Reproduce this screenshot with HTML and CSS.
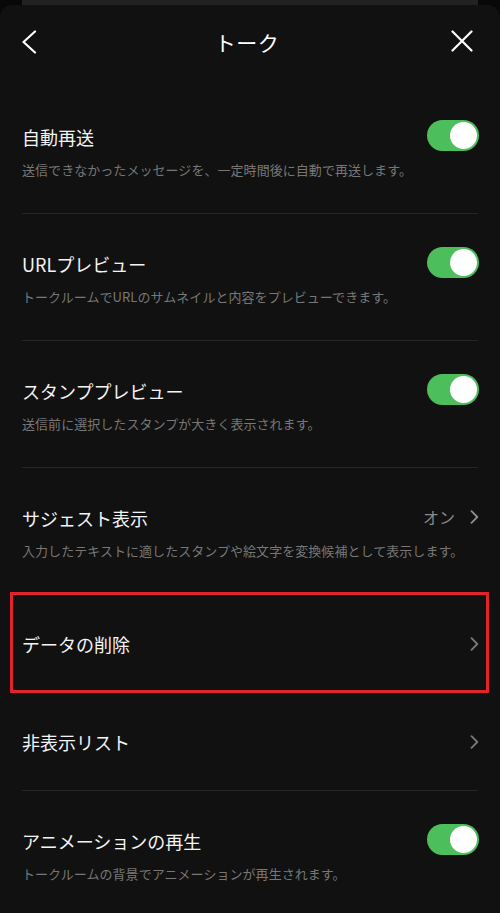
FILE: index.html
```html
<!DOCTYPE html>
<html lang="ja">
<head>
<meta charset="utf-8">
<title>トーク</title>
<link rel="stylesheet" href="styles.css">
</head>
<body>
<div class="screen">
  <div class="backdrop-strip"></div>
  <div class="sheet">
    <header class="header">
      <button class="icon-btn back" aria-label="戻る">
        <svg width="16" height="24" viewBox="0 0 16 24"><path d="M14 1.5 L2.5 12 L14 22.5" fill="none" stroke="#fff" stroke-width="2.2" stroke-linecap="round" stroke-linejoin="round"/></svg>
      </button>
      <h1 class="header-title">トーク</h1>
      <button class="icon-btn close" aria-label="閉じる">
        <svg width="22" height="22" viewBox="0 0 22 22"><path d="M1.5 1.5 L20.5 20.5 M20.5 1.5 L1.5 20.5" fill="none" stroke="#fff" stroke-width="2.2" stroke-linecap="round"/></svg>
      </button>
    </header>
    <ul class="list">
      <li class="row has-desc">
        <div class="row-head"><span class="title">自動再送</span><span class="toggle"><span class="knob"></span></span></div>
        <p class="desc">送信できなかったメッセージを、一定時間後に自動で再送します。</p>
      </li>
      <li class="row has-desc">
        <div class="row-head"><span class="title">URLプレビュー</span><span class="toggle"><span class="knob"></span></span></div>
        <p class="desc">トークルームでURLのサムネイルと内容をプレビューできます。</p>
      </li>
      <li class="row has-desc">
        <div class="row-head"><span class="title">スタンププレビュー</span><span class="toggle"><span class="knob"></span></span></div>
        <p class="desc">送信前に選択したスタンプが大きく表示されます。</p>
      </li>
      <li class="row has-desc">
        <div class="row-head"><span class="title">サジェスト表示</span>
          <span class="value">オン<svg class="chev" width="9" height="14" viewBox="0 0 9 14"><path d="M1.5 1.2 L7.3 7 L1.5 12.8" fill="none" stroke="#8f8f8f" stroke-width="1.8" stroke-linecap="round" stroke-linejoin="round"/></svg></span>
        </div>
        <p class="desc">入力したテキストに適したスタンプや絵文字を変換候補として表示します。</p>
      </li>
      <li class="row">
        <div class="row-head"><span class="title">データの削除</span>
          <svg class="chev" width="9" height="14" viewBox="0 0 9 14"><path d="M1.5 1.2 L7.3 7 L1.5 12.8" fill="none" stroke="#7a7a7a" stroke-width="1.8" stroke-linecap="round" stroke-linejoin="round"/></svg>
        </div>
      </li>
      <li class="row">
        <div class="row-head"><span class="title">非表示リスト</span>
          <svg class="chev" width="9" height="14" viewBox="0 0 9 14"><path d="M1.5 1.2 L7.3 7 L1.5 12.8" fill="none" stroke="#7a7a7a" stroke-width="1.8" stroke-linecap="round" stroke-linejoin="round"/></svg>
        </div>
      </li>
      <li class="row has-desc">
        <div class="row-head"><span class="title">アニメーションの再生</span><span class="toggle"><span class="knob"></span></span></div>
        <p class="desc">トークルームの背景でアニメーションが再生されます。</p>
      </li>
    </ul>
  </div>
  <div class="highlight"></div>
</div>
</body>
</html>
```
FILE: styles.css
```css
* { box-sizing: border-box; }
html, body {
  margin: 0;
  padding: 0;
  background: #080808;
}
body {
  font-family: "Noto Sans CJK JP", "Noto Sans", sans-serif;
  color: #fff;
}
.screen {
  position: relative;
  width: 500px;
  height: 913px;
  overflow: hidden;
}
.backdrop-strip {
  height: 5px;
  margin: 0 22px;
  background: #222224;
}
.sheet {
  background: #111111;
  border-radius: 12px 12px 0 0;
  min-height: 908px;
}
.header {
  height: 74px;
  display: grid;
  grid-template-columns: 1fr auto 1fr;
  align-items: center;
  padding: 0 27px 0 21px;
}
.icon-btn {
  background: none;
  border: 0;
  padding: 0;
  display: flex;
  cursor: pointer;
}
.back { justify-self: start; }
.close { justify-self: end; margin-top: -2px; }
.header-title {
  margin: 0;
  font-size: 21px;
  font-weight: 400;
  line-height: 28px;
  letter-spacing: 0.5px;
}
.list {
  list-style: none;
  margin: 0;
  padding: 8px 22px 0;
}
.row {
  border-bottom: 1px solid #262626;
  padding: 37px 0 0;
  height: 98px;
}
.row.has-desc {
  height: 127px;
  padding: 38px 0 0;
}
.row-head {
  display: flex;
  align-items: center;
  justify-content: space-between;
  height: 24px;
}
.title {
  font-size: 18px;
  line-height: 24px;
  color: #f4f4f4;
}
.desc {
  margin: 12px 0 0;
  font-size: 13px;
  line-height: 18px;
  letter-spacing: 0.05px;
  color: #777;
  white-space: nowrap;
}
.toggle {
  width: 52px;
  height: 31px;
  border-radius: 16px;
  background: #4cbf5c;
  display: flex;
  align-items: center;
  justify-content: flex-end;
  padding-right: 2px;
  margin-bottom: 3px;
  margin-right: -1px;
}
.knob {
  width: 27px;
  height: 27px;
  border-radius: 50%;
  background: #fff;
}
.value {
  display: flex;
  align-items: center;
  gap: 15px;
  font-size: 16px;
  color: #8a8a8a;
  margin-bottom: 2px;
}
.chev { display: block; margin-right: -1px; }
.highlight {
  position: absolute;
  left: 10px;
  top: 592px;
  width: 479px;
  height: 101px;
  border: 3px solid #e3232a;
  pointer-events: none;
}
```
